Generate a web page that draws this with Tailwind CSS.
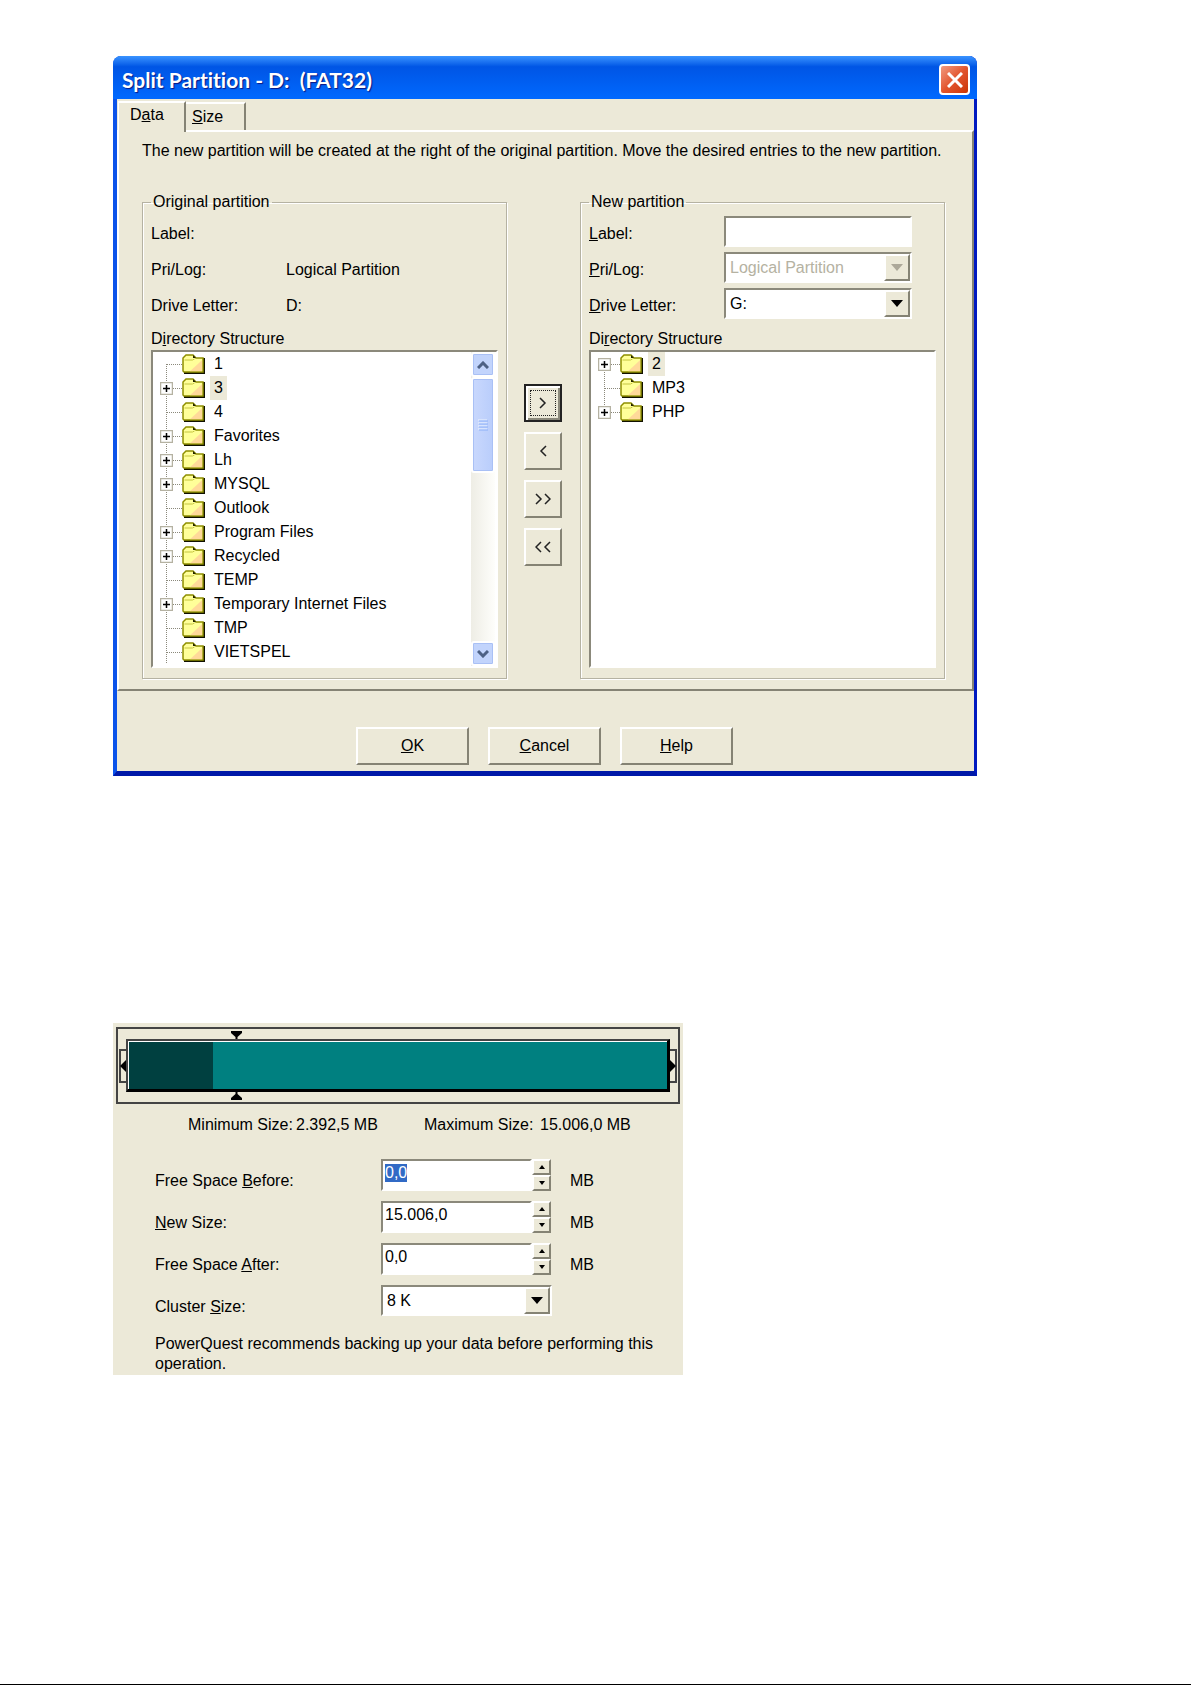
<!DOCTYPE html>
<html lang="en">
<head>
    <meta charset="UTF-8">
    <meta name="viewport" content="width=device-width, initial-scale=1.0">
    <title>Split Partition</title>
    <script src="https://cdn.jsdelivr.net/npm/@tailwindcss/browser@4"></script>
</head>
<body class="min-h-screen bg-white border-b border-black pt-14 pl-[113px] pr-8 font-['Liberation_Sans',Arial,sans-serif] text-base leading-5 text-black">

    <!-- Icon shapes shared by both trees -->
    <svg class="hidden">
        <symbol id="folder" viewBox="0 0 23 20">
            <path d="M2 19h20V4" fill="none" stroke="#111100" stroke-width="2"/>
            <path d="M1 17V4l3-3h7l3 3h7v14H2z" fill="#ffff99" stroke="#8f8f00" stroke-width="1.5"/>
            <path d="M11 1l3 3h-3z" fill="#222200"/>
            <path d="M8 17.200L20.200 6v11.200z" fill="#ffcc99" opacity=".75"/>
            <path d="M2.500 6h8l2-1" fill="none" stroke="#c5c540"/>
        </symbol>
        <symbol id="plus" viewBox="0 0 13 13">
            <path d="M.5.5h12v12H.5z" fill="#fff" stroke="#b5b2a2" stroke-width="1.500"/>
            <path d="M3 6.500h7M6.500 3v7" stroke="#000" stroke-width="1.500"/>
        </symbol>
    </svg>

    <main>
        <section class="w-full max-w-[864px] rounded-t-lg bg-[#0b53ea] border-l-4 border-[#0b53ea] border-b-[5px] border-b-[#0019a8] border-r-[3px] border-r-[#0019c0]">
            <header class="-ml-1 -mr-[3px] h-[43px] rounded-t-lg flex items-center justify-between pl-[9px] pr-[7px] pt-1 bg-linear-to-b from-[#3a93ff] via-[#0055e5] via-25% to-[#0069ff]">
                <h1 class="whitespace-pre font-['Lato','Open_Sans',sans-serif] text-[21px] leading-6 font-bold text-white [font-variant-ligatures:none] [text-shadow:1px_1px_1px_#0a1883]">Split Partition - D:  (FAT32)</h1>
                <button type="button" aria-label="Close" class="size-[31px] rounded-[4px] border-2 border-white bg-linear-to-br from-[#f0997f] via-[#e2552d] to-[#cc3400] flex items-center justify-center">
                    <svg class="size-4" viewBox="0 0 16 16"><path d="M1 1l14 14M15 1L1 15" stroke="#fff" stroke-width="3"/></svg>
                </button>
            </header>

            <div class="bg-[#ece9d8] pb-[6px]">
                <div class="flex items-end h-[31px] pl-px">
                    <button type="button" class="relative z-10 -mb-0.5 w-[68px] h-[31px] pl-[11px] pb-[6px] text-left bg-[#ece9d8] border-t-2 border-l border-t-white border-l-white border-r-2 border-r-[#858374]">D<u>a</u>ta</button>
                    <button type="button" class="w-[60px] h-7 pl-[6px] text-left border-t-2 border-t-white border-r-2 border-r-[#858374]"><u>S</u>ize</button>
                </div>

                <div class="border-2 border-t-white border-l-white border-r-[#858374] border-b-[#858374] pl-[23px] pr-[27px] pt-[9px] pb-[10px]">
                    <p>The new partition will be created at the right of the original partition. Move the desired entries to the new partition.</p>

                    <div class="mt-[31px] grid grid-cols-[1fr_73px_1fr]">
                        <fieldset class="min-w-0 border border-[#b5b2a2] shadow-[1px_1px_0_white,inset_1px_1px_0_white] px-2 pt-1 pb-[10px]">
                            <legend class="px-0.5">Original partition</legend>
                            <dl class="grid grid-cols-[135px_1fr] auto-rows-[36px] items-center">
                                <dt>Label:</dt><dd></dd>
                                <dt>Pri/Log:</dt><dd>Logical Partition</dd>
                                <dt>Drive Letter:</dt><dd>D:</dd>
                            </dl>
                            <h2 class="h-[26px] pt-[5px]">D<u>i</u>rectory Structure</h2>
                            <div class="h-[318px] flex bg-white border-2 border-t-[#8b897b] border-l-[#8b897b] border-r-white border-b-white">
                                <ul id="originalTree" class="flex-1 overflow-hidden"></ul>
                                <div class="w-6 mr-px flex flex-col bg-linear-to-r from-[#eeede5] to-[#fefefb]">
                                    <button type="button" aria-label="Scroll up" class="h-[25px] rounded-[3px] border-2 border-white bg-[#c2d4fc] shadow-[inset_0_0_0_1px_#a9c0f5] flex items-center justify-center">
                                        <svg class="w-3 h-2" viewBox="0 0 12 8"><path d="M1 7l5-5 5 5" fill="none" stroke="#4d6185" stroke-width="3"/></svg>
                                    </button>
                                    <div class="h-[96px] rounded-[3px] border-2 border-white bg-linear-to-r from-[#c9d8fd] to-[#b9cdfb] shadow-[inset_0_0_0_1px_#a9c0f5] flex items-center justify-center">
                                        <svg class="w-[10px] h-3" viewBox="0 0 10 12"><path d="M0 1h9M0 4h9M0 7h9M0 10h9" stroke="#eef4fe"/><path d="M1 2h9M1 5h9M1 8h9M1 11h9" stroke="#8cb0f8"/></svg>
                                    </div>
                                    <button type="button" aria-label="Scroll down" class="mt-auto h-[25px] rounded-[3px] border-2 border-white bg-[#c2d4fc] shadow-[inset_0_0_0_1px_#a9c0f5] flex items-center justify-center">
                                        <svg class="w-3 h-2" viewBox="0 0 12 8"><path d="M1 1l5 5 5-5" fill="none" stroke="#4d6185" stroke-width="3"/></svg>
                                    </button>
                                </div>
                            </div>
                        </fieldset>

                        <div class="flex flex-col items-center gap-[10px] pt-48 pr-0.5">
                            <button type="button" aria-label="Move right" class="size-[38px] border-2 border-[#222] shadow-[inset_2px_2px_0_white,inset_-2px_-2px_0_#8b897b] p-1">
                                <span class="size-full border border-dotted border-[#222] flex items-center justify-center">
                                    <svg class="w-2 h-3" viewBox="0 0 8 12"><path d="M1 1l5 5-5 5" fill="none" stroke="#222" stroke-width="1.500"/></svg>
                                </span>
                            </button>
                            <button type="button" aria-label="Move left" class="size-[38px] border-2 border-t-white border-l-white border-r-[#858374] border-b-[#858374] flex items-center justify-center">
                                <svg class="w-2 h-3" viewBox="0 0 8 12"><path d="M7 1L2 6l5 5" fill="none" stroke="#222" stroke-width="1.500"/></svg>
                            </button>
                            <button type="button" aria-label="Move all right" class="size-[38px] border-2 border-t-white border-l-white border-r-[#858374] border-b-[#858374] flex items-center justify-center">
                                <svg class="w-4 h-3" viewBox="0 0 16 12"><path d="M1 1l5 5-5 5M10 1l5 5-5 5" fill="none" stroke="#222" stroke-width="1.500"/></svg>
                            </button>
                            <button type="button" aria-label="Move all left" class="size-[38px] border-2 border-t-white border-l-white border-r-[#858374] border-b-[#858374] flex items-center justify-center">
                                <svg class="w-4 h-3" viewBox="0 0 16 12"><path d="M6 1L1 6l5 5M15 1l-5 5 5 5" fill="none" stroke="#222" stroke-width="1.500"/></svg>
                            </button>
                        </div>

                        <fieldset class="min-w-0 border border-[#b5b2a2] shadow-[1px_1px_0_white,inset_1px_1px_0_white] px-2 pt-1 pb-[10px]">
                            <legend class="px-0.5">New partition</legend>
                            <div class="grid grid-cols-[135px_188px] auto-rows-[36px]">
                                <label for="newLabel" class="pt-2"><u>L</u>abel:</label>
                                <input type="text" id="newLabel" class="h-[31px] px-1 bg-white border-2 border-t-[#8b897b] border-l-[#8b897b] border-r-white border-b-white">

                                <label for="newType" class="pt-2"><u>P</u>ri/Log:</label>
                                <div class="relative h-[31px]">
                                    <select id="newType" disabled class="appearance-none size-full pl-1 pr-7 bg-white text-[#b5b2a2] opacity-100 border-2 border-t-[#8b897b] border-l-[#8b897b] border-r-white border-b-white">
                                        <option>Logical Partition</option>
                                    </select>
                                    <span class="absolute right-0.5 inset-y-0.5 w-[26px] bg-[#ece9d8] border-2 border-t-white border-l-white border-r-[#858374] border-b-[#858374] flex items-center justify-center pointer-events-none">
                                        <svg class="w-3 h-[7px]" viewBox="0 0 12 7"><path d="M0 0h12L6 7z" fill="#aca899"/></svg>
                                    </span>
                                </div>

                                <label for="newDrive" class="pt-2"><u>D</u>rive Letter:</label>
                                <div class="relative h-[31px]">
                                    <select id="newDrive" class="appearance-none size-full pl-1 pr-7 bg-white border-2 border-t-[#8b897b] border-l-[#8b897b] border-r-white border-b-white">
                                        <option>G:</option>
                                    </select>
                                    <span class="absolute right-0.5 inset-y-0.5 w-[26px] bg-[#ece9d8] border-2 border-t-white border-l-white border-r-[#858374] border-b-[#858374] flex items-center justify-center pointer-events-none">
                                        <svg class="w-3 h-[7px]" viewBox="0 0 12 7"><path d="M0 0h12L6 7z"/></svg>
                                    </span>
                                </div>
                            </div>
                            <h2 class="h-[26px] pt-[5px]">Di<u>r</u>ectory Structure</h2>
                            <div class="h-[318px] bg-white border-2 border-t-[#8b897b] border-l-[#8b897b] border-r-white border-b-white">
                                <ul id="newTree"></ul>
                            </div>
                        </fieldset>
                    </div>
                </div>

                <div class="mt-9 pr-0.5 flex justify-center gap-[19px]">
                    <button type="button" class="w-[113px] h-[38px] border-2 border-t-white border-l-white border-r-[#858374] border-b-[#858374]"><u>O</u>K</button>
                    <button type="button" class="w-[113px] h-[38px] border-2 border-t-white border-l-white border-r-[#858374] border-b-[#858374]"><u>C</u>ancel</button>
                    <button type="button" class="w-[113px] h-[38px] border-2 border-t-white border-l-white border-r-[#858374] border-b-[#858374]"><u>H</u>elp</button>
                </div>
            </div>
        </section>

        <section class="mt-[247px] w-full max-w-[570px] bg-[#ece9d8] px-[3px] pt-1 pb-px">
            <!-- Partition size bar with its drag handles -->
            <div class="flex items-center border-2 border-[#444] px-px py-[10px]">
                <button type="button" aria-label="Resize from left" class="w-[7px] h-[34px] border-2 border-r-0 border-[#444] flex items-center justify-end">
                    <svg class="w-[6px] h-3 shrink-0" viewBox="0 0 6 12"><path d="M6 0v12L0 6z"/></svg>
                </button>
                <div class="relative flex-1 h-[53px] bg-[#008080] border-t-2 border-l-2 border-[#444] border-r-[3px] border-r-black border-b-[3px] border-b-black shadow-[inset_1px_1px_0_white]">
                    <div class="mt-px ml-px h-[47px] bg-[#004040]" style="width: 15.6%"></div>
                    <svg class="absolute -top-[10px] left-[103px] w-[11px] h-2" viewBox="0 0 11 8"><path d="M0 0h11v2L6.500 6v2h-2V6L0 2z"/></svg>
                    <svg class="absolute -bottom-[11px] left-[103px] w-[11px] h-2" viewBox="0 0 11 8"><path d="M4.500 0h2v2L11 6v2H0V6l4.500-4z"/></svg>
                </div>
                <button type="button" aria-label="Resize from right" class="w-[7px] h-[34px] border-2 border-l-0 border-[#444] flex items-center">
                    <svg class="w-[6px] h-3 shrink-0" viewBox="0 0 6 12"><path d="M0 0v12l6-6z"/></svg>
                </button>
            </div>

            <div class="mt-[11px] pl-[72px] grid grid-cols-[108px_128px_116px_1fr]">
                <span>Minimum Size:</span><span>2.392,5 MB</span>
                <span>Maximum Size:</span><span>15.006,0 MB</span>
            </div>

            <form class="mt-6 pl-[39px]">
                <div class="h-[42px] flex items-start">
                    <label for="spaceBefore" class="w-[226px] pt-3">Free Space <u>B</u>efore:</label>
                    <input type="text" id="spaceBefore" value="0,0" class="w-[151px] h-8 pl-0.5 pb-1 bg-white outline-none selection:bg-[#316ac5] selection:text-white border-2 border-t-[#8b897b] border-l-[#8b897b] border-r-white border-b-white">
                    <div class="w-[19px] h-8 flex flex-col">
                        <button type="button" aria-label="Increase" class="flex-1 border-2 border-t-white border-l-white border-r-[#858374] border-b-[#858374] flex items-center justify-center"><svg class="w-[6px] h-1" viewBox="0 0 6 4"><path d="M0 4h6L3 0z"/></svg></button>
                        <button type="button" aria-label="Decrease" class="flex-1 border-2 border-t-white border-l-white border-r-[#858374] border-b-[#858374] flex items-center justify-center"><svg class="w-[6px] h-1" viewBox="0 0 6 4"><path d="M0 0h6L3 4z"/></svg></button>
                    </div>
                    <span class="pl-[19px] pt-3">MB</span>
                </div>
                <div class="h-[42px] flex items-start">
                    <label for="newSize" class="w-[226px] pt-3"><u>N</u>ew Size:</label>
                    <input type="text" id="newSize" value="15.006,0" class="w-[151px] h-8 pl-0.5 pb-1 bg-white border-2 border-t-[#8b897b] border-l-[#8b897b] border-r-white border-b-white">
                    <div class="w-[19px] h-8 flex flex-col">
                        <button type="button" aria-label="Increase" class="flex-1 border-2 border-t-white border-l-white border-r-[#858374] border-b-[#858374] flex items-center justify-center"><svg class="w-[6px] h-1" viewBox="0 0 6 4"><path d="M0 4h6L3 0z"/></svg></button>
                        <button type="button" aria-label="Decrease" class="flex-1 border-2 border-t-white border-l-white border-r-[#858374] border-b-[#858374] flex items-center justify-center"><svg class="w-[6px] h-1" viewBox="0 0 6 4"><path d="M0 0h6L3 4z"/></svg></button>
                    </div>
                    <span class="pl-[19px] pt-3">MB</span>
                </div>
                <div class="h-[42px] flex items-start">
                    <label for="spaceAfter" class="w-[226px] pt-3">Free Space <u>A</u>fter:</label>
                    <input type="text" id="spaceAfter" value="0,0" class="w-[151px] h-8 pl-0.5 pb-1 bg-white border-2 border-t-[#8b897b] border-l-[#8b897b] border-r-white border-b-white">
                    <div class="w-[19px] h-8 flex flex-col">
                        <button type="button" aria-label="Increase" class="flex-1 border-2 border-t-white border-l-white border-r-[#858374] border-b-[#858374] flex items-center justify-center"><svg class="w-[6px] h-1" viewBox="0 0 6 4"><path d="M0 4h6L3 0z"/></svg></button>
                        <button type="button" aria-label="Decrease" class="flex-1 border-2 border-t-white border-l-white border-r-[#858374] border-b-[#858374] flex items-center justify-center"><svg class="w-[6px] h-1" viewBox="0 0 6 4"><path d="M0 0h6L3 4z"/></svg></button>
                    </div>
                    <span class="pl-[19px] pt-3">MB</span>
                </div>
                <div class="h-[42px] flex items-start">
                    <label for="clusterSize" class="w-[226px] pt-3">Cluster <u>S</u>ize:</label>
                    <div class="relative w-[171px] h-[31px]">
                        <select id="clusterSize" class="appearance-none size-full pl-1 pr-7 bg-white border-2 border-t-[#8b897b] border-l-[#8b897b] border-r-white border-b-white">
                            <option>8 K</option>
                        </select>
                        <span class="absolute right-0.5 inset-y-0.5 w-[26px] bg-[#ece9d8] border-2 border-t-white border-l-white border-r-[#858374] border-b-[#858374] flex items-center justify-center pointer-events-none">
                            <svg class="w-3 h-[7px]" viewBox="0 0 12 7"><path d="M0 0h12L6 7z"/></svg>
                        </span>
                    </div>
                </div>
            </form>

            <p class="mt-[7px] pl-[39px] pr-6">PowerQuest recommends backing up your data before performing this operation.</p>
        </section>
    </main>

    <script>
        // A leading "+" marks a folder that can be expanded, "*" the selected one
        const original = ['1', '+*3', '4', '+Favorites', '+Lh', '+MYSQL', 'Outlook', '+Program Files', '+Recycled', 'TEMP', '+Temporary Internet Files', 'TMP', 'VIETSPEL'];
        const created = ['+*2', 'MP3', '+PHP'];

        function renderTree(id, items, more) {
            document.getElementById(id).innerHTML = items.map((item, i) => {
                const name = item.replace(/^[+*]+/, '');
                const top = i === 0 ? 12 : 0;
                const bottom = i === items.length - 1 && !more ? 12 : 24;
                return `
                    <li class="flex items-center h-6 whitespace-nowrap">
                        <svg class="w-[54px] h-6 shrink-0" viewBox="0 0 54 24">
                            <path d="M13.500 ${top}V${bottom}M14 12.500H30" stroke="#8b897b" stroke-dasharray="1 1" fill="none"/>
                            ${item[0] === '+' ? '<use href="#plus" x="7" y="6" width="13" height="13"/>' : ''}
                            <use href="#folder" x="29" y="2" width="23" height="20"/>
                        </svg>
                        <span class="ml-[3px] px-1 leading-6 ${item.includes('*') ? 'bg-[#ece9d8]' : ''}">${name}</span>
                    </li>`;
            }).join('');
        }

        renderTree('originalTree', original, true);
        renderTree('newTree', created, false);

        document.getElementById('spaceBefore').focus({ preventScroll: true });
        document.getElementById('spaceBefore').select();
    </script>
</body>
</html>
